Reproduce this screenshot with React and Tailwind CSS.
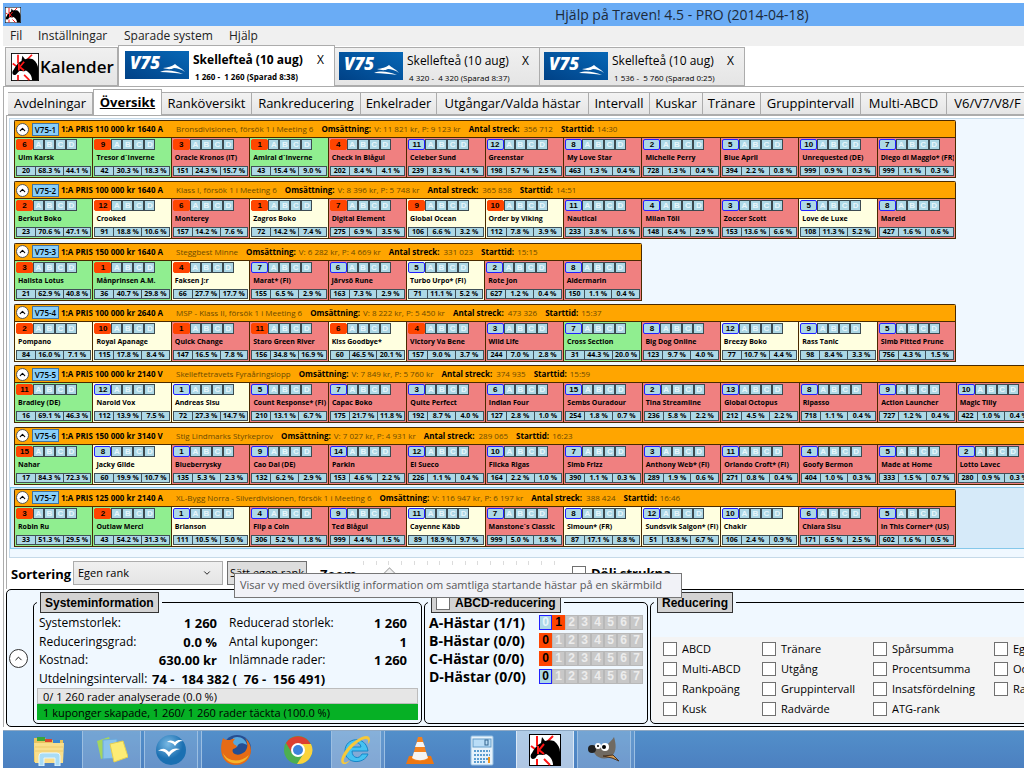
import { ChevronDown, ChevronUp } from 'lucide-react';

const menu = [
  { label: 'Fil', width: 'w-7' },
  { label: 'Inställningar', width: 'w-[86px]' },
  { label: 'Sparade system', width: 'w-[105px]' },
  { label: 'Hjälp', width: 'w-10' },
];

const systems = [
  { rows: '1 260 -  1 260 (Sparad 8:38)', active: true },
  { rows: '4 320 -  4 320 (Sparad 8:37)' },
  { rows: '1 536 -  5 760 (Sparad 0:25)' },
];

const views = [
  { label: 'Avdelningar', width: 'w-[85px]' },
  { label: 'Översikt', width: 'w-[69px]', active: true },
  { label: 'Ranköversikt', width: 'w-[90px]' },
  { label: 'Rankreducering', width: 'w-[109px]' },
  { label: 'Enkelrader', width: 'w-[76px]' },
  { label: 'Utgångar/Valda hästar', width: 'w-[152px]' },
  { label: 'Intervall', width: 'w-[61px]' },
  { label: 'Kuskar', width: 'w-[53px]' },
  { label: 'Tränare', width: 'w-[58px]' },
  { label: 'Gruppintervall', width: 'w-[100px]' },
  { label: 'Multi-ABCD', width: 'w-[86px]' },
  { label: 'V6/V7/V8/F', width: 'w-[82px]' },
];

// horses: number|name|odds|V75 share|trend, tones: one letter per horse, picked: how many lead numbers are marked
const races = [
  {
    id: 'V75-1', title: '1:A PRIS 110 000 kr 1640 A', desc: 'Bronsdivisionen, försök 1 i Meeting 6',
    turnover: 'V: 11 821 kr, P: 9 123 kr', marks: '356 712', start: '14:30', picked: 5, tones: 'ggrgrrrrrrrr',
    horses: [
      '6|Ulm Karsk|20|68.3|44.1', '9|Tresor d´Inverne|42|30.3|18.3', '3|Oracle Kronos (IT)|151|24.3|15.7',
      '1|Amiral d´Inverne|43|15.4|9.0', '4|Check in Blågul|202|8.4|4.1', '11|Celeber Sund|239|8.3|4.1',
      '12|Greenstar|198|5.7|2.5', '8|My Love Star|463|1.3|0.4', '2|Michelle Perry|728|1.3|0.4',
      '5|Blue April|394|2.2|0.8', '10|Unrequested (DE)|999|0.9|0.3', '7|Diego di Maggio* (FR)|999|1.1|0.3',
    ],
  },
  {
    id: 'V75-2', title: '1:A PRIS 100 000 kr 1640 A', desc: 'Klass I, försök 1 i Meeting 6',
    turnover: 'V: 8 396 kr, P: 5 748 kr', marks: '365 858', start: '14:51', picked: 7, tones: 'gyryryyrrryr',
    horses: [
      '2|Berkut Boko|23|70.6|47.1', '12|Crooked|91|18.8|10.6', '6|Monterey|157|14.2|7.6',
      '1|Zagros Boko|72|14.2|7.4', '7|Digital Element|275|6.9|3.5', '9|Global Ocean|106|6.6|3.2',
      '10|Order by Viking|112|7.8|3.9', '11|Nautical|233|3.8|1.6', '4|Milan Töll|148|6.4|2.9',
      '3|Zoccer Scott|153|13.6|6.6', '5|Love de Luxe|108|11.3|5.2', '8|Mareld|427|1.6|0.6',
    ],
  },
  {
    id: 'V75-3', title: '1:A PRIS 150 000 kr 1640 A', desc: 'Steggbest Minne',
    turnover: 'V: 6 282 kr, P: 4 669 kr', marks: '331 023', start: '15:15', picked: 3, tones: 'ggyrryrr',
    horses: [
      '3|Hallsta Lotus|21|62.9|40.8', '1|Månprinsen A.M.|36|40.7|29.8', '4|Faksen J:r|66|27.7|17.7',
      '7|Marat* (FI)|155|6.5|2.9', '6|Järvsö Rune|163|7.3|2.9', '5|Turbo Urpo* (FI)|71|11.1|5.2',
      '2|Rote Jon|627|1.2|0.4', '8|Aldermarin|150|1.1|0.4',
    ],
  },
  {
    id: 'V75-4', title: '1:A PRIS 100 000 kr 2640 A', desc: 'MSP - Klass II, försök 1 i Meeting 6',
    turnover: 'V: 8 222 kr, P: 5 450 kr', marks: '473 326', start: '15:37', picked: 6, tones: 'yyrryrrgryyr',
    horses: [
      '2|Pompano|84|16.0|7.1', '10|Royal Apanage|115|17.8|8.4', '1|Quick Change|147|16.5|7.8',
      '11|Staro Green River|156|34.8|16.9', '6|Kiss Goodbye*|60|46.5|20.1', '4|Victory Va Bene|157|9.0|3.7',
      '3|Wild Life|244|7.0|2.8', '7|Cross Section|31|44.3|20.0', '8|Big Dog Online|123|9.7|4.0',
      '12|Breezy Boko|77|10.7|4.4', '9|Rass Tanic|98|8.4|3.3', '5|Simb Pitted Prune|756|4.3|1.5',
    ],
  },
  {
    id: 'V75-5', title: '1:A PRIS 100 000 kr 2140 V', desc: 'Skelleftetravets Fyraåringslopp',
    turnover: 'V: 7 849 kr, P: 5 760 kr', marks: '374 935', start: '15:59', picked: 1, tones: 'gyyrrrrrrrrrr',
    horses: [
      '11|Bradley (DE)|16|69.1|46.3', '12|Narold Vox|112|13.9|7.5', '1|Andreas Sisu|72|27.3|14.7',
      '5|Count Response* (FI)|210|13.1|6.7', '7|Capac Boko|175|21.7|11.8', '3|Quite Perfect|192|8.7|4.0',
      '6|Indian Four|127|2.8|1.0', '15|Sembs Ouradour|254|1.8|0.7', '2|Tina Streamline|236|5.8|2.2',
      '13|Global Octopus|212|4.5|2.2', '8|Ripasso|718|1.1|0.4', '9|Action Launcher|727|1.2|0.4',
      '10|Magic Tilly|422|1.0|0.4',
    ],
  },
  {
    id: 'V75-6', title: '1:A PRIS 150 000 kr 3140 V', desc: 'Stig Lindmarks Styrkeprov',
    turnover: 'V: 7 027 kr, P: 4 931 kr', marks: '289 065', start: '16:23', picked: 1, tones: 'gyrrrrrrrrrrr',
    horses: [
      '15|Nahar|17|84.3|72.3', '8|Jacky Glide|60|19.9|10.7', '1|Blueberrysky|135|5.3|2.3',
      '9|Cao Dai (DE)|132|6.2|2.9', '14|Parkin|153|4.6|2.2', '12|El Sueco|226|1.1|0.4',
      '10|Flicka Rigas|164|2.2|1.0', '7|Simb Frizz|390|1.1|0.3', '3|Anthony Web* (FI)|289|1.9|0.6',
      '11|Orlando Croft* (FI)|271|0.8|0.4', '4|Goofy Bermon|404|1.0|0.3', '5|Made at Home|333|1.5|0.7',
      '2|Lotto Lavec|280|0.9|0.3',
    ],
  },
  {
    id: 'V75-7', title: '1:A PRIS 125 000 kr 2140 A', desc: 'XL-Bygg Norra - Silverdivisionen, försök 1 i Meeting 6',
    turnover: 'V: 116 947 kr, P: 6 197 kr', marks: '388 424', start: '16:46', picked: 2, tones: 'ggyrryryyyrr', selected: true,
    horses: [
      '3|Robin Ru|33|51.3|29.5', '2|Outlaw Merci|43|54.2|31.3', '1|Brianson|111|10.5|5.0',
      '4|Flip a Coin|306|5.2|1.8', '9|Ted Blågul|999|4.4|1.5', '11|Cayenne Käbb|89|18.9|9.7',
      '7|Manstone´s Classic|999|5.0|1.8', '8|Simoun* (FR)|87|17.1|8.8', '12|Sundsvik Saigon* (FI)|51|13.8|6.7',
      '10|Chakir|106|2.4|0.9', '6|Chiara Sisu|171|6.5|2.5', '5|In This Corner* (US)|602|1.6|0.5',
    ],
  },
];

const toneClass = { g: 'bg-[#90ee90]', r: 'bg-[#f08080]', y: 'bg-[#ffffe0]' };

const groups = [
  { label: 'A-Hästar (1/1)', picked: 1, allowed: [0] },
  { label: 'B-Hästar (0/0)', picked: 0, allowed: [] },
  { label: 'C-Hästar (0/0)', picked: 0, allowed: [] },
  { label: 'D-Hästar (0/0)', picked: -1, allowed: [0] },
];

const reductions = [
  { width: 'w-[99px]', items: ['ABCD', 'Multi-ABCD', 'Rankpoäng', 'Kusk'] },
  { width: 'w-[111px]', items: ['Tränare', 'Utgång', 'Gruppintervall', 'Radvärde'] },
  { width: 'w-[121px]', items: ['Spårsumma', 'Procentsumma', 'Insatsfördelning', 'ATG-rank'] },
  { width: 'w-[110px]', items: ['Egen rank', 'Oddssumma', 'Radintervall'] },
];

function HorseIcon({ className }) {
  return (
    <svg viewBox="0 0 32 32" className={className} aria-hidden="true">
      <rect x="0.5" y="0.5" width="31" height="31" fill="#fff" stroke="#000" />
      <path d="M8 2 V12 M24 2 L18 8 M2 12 L6 15 M8 25 V31 M15 25 L21 31" stroke="#ff1515" strokeWidth="2" fill="none" />
      <path
        d="M12 9 L13 3 L16 7 C19 6 22 6 25 7 C29 10 31 14 31 18 V31 L24 31 C24 26 21 22 17 20 C14 22 11 20 9 21 C7 22 7 25 4 25 C1 25 1 21 3 19 C5 15 8 11 12 9 Z"
        fill="#000"
      />
      <path d="M9 12 V20 M15 10 L10 16 L15 20" stroke="#ff1515" strokeWidth="2" fill="none" />
    </svg>
  );
}

function V75Logo() {
  return (
    <svg viewBox="0 0 64 28" className="h-7 w-16 shrink-0" role="img" aria-label="V75">
      <defs>
        <linearGradient id="v75" x1="0" x2="1" y1="1" y2="0">
          <stop offset="0" stopColor="#004186" />
          <stop offset="1" stopColor="#0767b6" />
        </linearGradient>
      </defs>
      <rect width="64" height="28" fill="url(#v75)" />
      <text x="5" y="18" fill="#fff" fontFamily="Open Sans, sans-serif" fontSize="17" fontWeight="800" fontStyle="italic">V75</text>
      <path d="M38 17 C44 16 46 16 50 13 C53 16 57 17 60 21 C56 18 52 17 49 17 C45 19 42 18 38 17 Z" fill="#fff" />
      <path d="M35 21 C42 18 50 20 58 23 C51 22 43 21 35 21 Z" fill="#fff" />
    </svg>
  );
}

function SystemTab({ system }) {
  const { active, rows } = system;
  return (
    <div
      role="tab"
      aria-selected={!!active}
      className={
        active
          ? 'flex h-[41px] w-[217px] items-start gap-1 border border-b-0 border-[#acacac] bg-white pt-[5px] pl-[6px]'
          : 'flex h-[39px] w-[205px] items-start gap-1 border border-l-0 border-[#acacac] bg-linear-to-b from-[#f0f0f0] to-[#e5e5e5] pt-[4px] pl-[4px]'
      }
    >
      <V75Logo />
      <div className={active ? 'w-[120px] font-bold' : 'w-[111px]'}>
        <div className="text-[12px] leading-[18px] whitespace-nowrap">Skellefteå (10 aug)</div>
        <div className={active ? 'pl-[2px] text-[8px] leading-[16px] font-bold whitespace-pre' : 'pl-[2px] text-[8px] leading-[16px] whitespace-pre'}>{rows}</div>
      </div>
      <button className="text-[12px] leading-[18px]" aria-label="Stäng">X</button>
    </div>
  );
}

function Horse({ horse, tone, picked }) {
  const [number, name, odds, share, trend] = horse.split('|');
  return (
    <div className={`min-w-0 flex-1 overflow-hidden border-r border-[#4a2a00] px-px ${toneClass[tone]}`}>
      <div className="mt-px flex h-[11px] font-['Liberation_Sans'] text-[8px] leading-[9px] font-bold">
        <button
          className={
            picked
              ? 'w-[17px] rounded-xs border border-[#ff4500] bg-[#ff4500]'
              : 'w-[17px] rounded-xs border border-[#2020ff] bg-[#add8e6]'
          }
        >
          {number}
        </button>
        {['A', 'B', 'C', 'D'].map((letter) => (
          <button key={letter} className="w-[11px] border border-[#3c4a50] bg-[#add8e6] text-[#e8f6fb]">
            {letter}
          </button>
        ))}
      </div>
      <div className="overflow-hidden pl-[2px] text-[7px] leading-[16px] font-bold whitespace-nowrap">{name}</div>
      <div className="flex h-[10px] border border-[#405058] bg-[#add8e6] text-center text-[7px] leading-[8px] font-bold whitespace-nowrap">
        <span className="w-[18px]">{odds}</span>
        <span className="flex-1 border-l border-[#405058]">{share} %</span>
        <span className="flex-1 border-l border-[#405058]">{trend} %</span>
      </div>
    </div>
  );
}

function Race({ race }) {
  const width = Math.round((race.horses.length * 942) / 12);
  return (
    <li className={race.selected ? 'border border-r-0 border-[#85c8ea] bg-[#d6eaf9] py-px pl-[3px]' : 'py-px pl-1'}>
      <section className="overflow-hidden rounded-t-xs border border-r-0 border-[#4a2a00]" style={{ width }}>
        <header className="flex h-[16px] items-center border-r border-[#4a2a00] bg-[#ffa500] text-[8px] whitespace-nowrap text-[#6b4a00]">
          <button className="ml-px grid size-[13px] place-items-center rounded-full border border-[#555] bg-white text-black" aria-label="Fäll ihop">
            <ChevronUp size={9} strokeWidth={3} />
          </button>
          <span className="ml-[3px] w-[27px] border border-[#41719c] bg-[#87cefa] text-center leading-[11px] font-semibold text-black">{race.id}</span>
          <b className="ml-[2px] w-[115px] text-black">{race.title}</b>
          <span>{race.desc}</span>
          <b className="mr-[3px] ml-2 text-black">Omsättning:</b>
          <span>{race.turnover}</span>
          <b className="mr-[4px] ml-2 text-black">Antal streck:</b>
          <span>{race.marks}</span>
          <b className="mr-[3px] ml-2 text-black">Starttid:</b>
          <span>{race.start}</span>
        </header>
        <div className="flex h-10 border-t border-[#4a2a00]">
          {race.horses.map((horse, i) => (
            <Horse key={horse} horse={horse} tone={race.tones[i]} picked={i < race.picked} />
          ))}
        </div>
      </section>
    </li>
  );
}

function Check({ label }) {
  return (
    <label className="flex h-5 items-center gap-[5px] text-[11px] whitespace-nowrap">
      <input type="checkbox" className="size-[14px] appearance-none border border-[#707070] bg-white" />
      {label}
    </label>
  );
}

function Group({ title, className, children }) {
  return (
    <fieldset className={`min-w-0 rounded-[5px] border border-black ${className}`}>
      <legend className="ml-[3px] px-[3px]">
        <span className="flex h-[21px] items-center border border-[#333] bg-[#d3d3d3] px-1 font-['Liberation_Sans'] text-[12px] font-bold whitespace-nowrap">{title}</span>
      </legend>
      {children}
    </fieldset>
  );
}

function SystemInfo() {
  return (
    <Group title="Systeminformation" className="w-[389px]">
      <dl className="mt-px grid h-[74px] grid-cols-[98px_80px_12px_98px_80px] grid-rows-4 items-center pl-[5px] text-[12px] leading-[18px] whitespace-nowrap [&_dd]:text-right [&_dd]:text-[13px] [&_dd]:font-bold">
        <dt>Systemstorlek:</dt>
        <dd>1 260</dd>
        <dt className="col-start-4">Reducerad storlek:</dt>
        <dd>1 260</dd>
        <dt>Reduceringsgrad:</dt>
        <dd>0.0 %</dd>
        <dt className="col-start-4">Antal kuponger:</dt>
        <dd>1</dd>
        <dt>Kostnad:</dt>
        <dd>630.00 kr</dd>
        <dt className="col-start-4">Inlämnade rader:</dt>
        <dd>1 260</dd>
        <dt>Utdelningsintervall:</dt>
        <dd className="col-span-4 pl-[15px] text-left! whitespace-pre">74 -  184 382 (  76 -  156 491)</dd>
      </dl>
      <div className="mx-[3px] text-[11px]">
        <div className="h-4 border border-[#bcbcbc] bg-[#e6e6e6] pl-[5px] leading-[15px]">0/ 1 260 rader analyserade (0.0 %)</div>
        <div className="h-4 bg-[#06b025] pl-[6px] leading-[17px]">1 kuponger skapade, 1 260/ 1 260 rader täckta (100.0 %)</div>
      </div>
    </Group>
  );
}

function AbcdReduction() {
  const title = (
    <label className="flex items-center gap-[5px]">
      <input type="checkbox" className="size-[14px] appearance-none border border-[#707070] bg-white" />
      ABCD-reducering
    </label>
  );
  return (
    <Group title={title} className="w-[224px]">
      {groups.map((group) => (
        <div key={group.label} className="flex h-[18px] items-center pl-1">
          <span className="w-[110px] text-[14px] font-bold whitespace-nowrap">{group.label}</span>
          {[0, 1, 2, 3, 4, 5, 6, 7].map((n) => {
            let look = 'border-[#b8b8b8] bg-[#c8c8c8] text-[#ececec]';
            if (group.picked === n) look = 'border-[#ff4500] bg-[#ff4500] text-black';
            else if (group.allowed.includes(n)) look = group.picked < 0 ? 'border-[#2020ff] bg-[#add8e6] text-black' : 'border-[#2020ff] bg-[#add8e6] text-[#e8f6fb]';
            return (
              <button key={n} className={`h-[15px] w-[13px] border font-['Liberation_Sans'] text-[12px] leading-[13px] font-bold ${look}`}>
                {n}
              </button>
            );
          })}
        </div>
      ))}
    </Group>
  );
}

const apps = {
  folder: (
    <svg viewBox="0 0 32 32" className="size-8">
      <path d="M1 4 H12 L14 6 H30 V28 H1 Z" fill="#e8c45f" />
      <path d="M4 3 H12 V7 H4 Z" fill="#3aa53a" />
      <path d="M12 5 H19 V8 H12 Z" fill="#d9462c" />
      <path d="M20 6 H27 V9 H20 Z" fill="#3b88cf" />
      <path d="M1 9 H31 L30 29 H2 Z" fill="#f9df8c" />
      <path d="M2 13 H30 M2 17 H30" stroke="#edcb6c" />
      <path d="M6 32 V22 Q6 19 9 19 H24 Q27 19 27 22 V32 H22 V24 H11 V32 Z" fill="#a9dcf5" stroke="#e4f6ff" />
    </svg>
  ),
  notes: (
    <svg viewBox="0 0 32 32" className="size-8">
      <path d="M1 7 L13 3 L18 20 L5 25 Z" fill="#a4d65e" />
      <path d="M7 6 L21 5 L21 24 L7 25 Z" fill="#8cc4ec" stroke="#6aa9dc" />
      <path d="M14 10 L27 7 L32 23 L18 28 Z" fill="#fdec75" stroke="#e5cf50" />
    </svg>
  ),
  office: (
    <svg viewBox="0 0 32 32" className="size-8">
      <defs>
        <radialGradient id="office" cx="0.4" cy="0.3">
          <stop offset="0" stopColor="#79b9e4" />
          <stop offset="1" stopColor="#1b70b2" />
        </radialGradient>
      </defs>
      <circle cx="16" cy="16" r="15" fill="url(#office)" />
      <path d="M12 8 C16 5 18 7 20 8 C23 5 26 6 28 7 C24 7 22 9 20 12 C18 9 16 8 12 8 Z" fill="#fff" />
      <path d="M3 17 C8 13 11 15 14 18 C17 14 21 14 25 15 C20 16 16 19 14 23 C11 18 8 16 3 17 Z" fill="#fff" />
    </svg>
  ),
  firefox: (
    <svg viewBox="0 0 32 32" className="size-8">
      <circle cx="17" cy="15" r="14" fill="#254e92" />
      <path d="M13 4 C19 1 26 5 27 11 C22 8 18 9 17 13 C13 12 12 8 13 4 Z" fill="#58a8dc" />
      <path d="M3 4 C5 6 7 6 10 6 C13 4 15 5 15 5 C13 7 12 9 15 11 C18 12 17 14 13 15 C11 19 16 22 21 20 C28 18 29 10 25 4 C36 13 31 31 16 31 C3 31 -2 18 3 4 Z" fill="#e66b15" />
      <path d="M3 19 C7 27 19 30 29 21 C25 29 18 30 13 29 C8 28 4 24 3 19 Z" fill="#f6b52c" />
    </svg>
  ),
  chrome: (
    <svg viewBox="0 0 32 32" className="size-8">
      <circle cx="16" cy="16" r="14" fill="#4caf50" />
      <path d="M4 9 A14 14 0 0 1 28 9 L29 11 H16 L10 19 Z" fill="#dc3f32" />
      <path d="M29 10 A14 14 0 0 1 15 30 L22 19 L20 10 Z" fill="#fbd33b" />
      <circle cx="16" cy="16" r="7" fill="#fff" />
      <circle cx="16" cy="16" r="5" fill="#3d83dc" />
    </svg>
  ),
  explorer: (
    <svg viewBox="0 0 32 32" className="size-8">
      <path d="M28 17 H12 C12 24 19 26 22 20 H28 C24 31 5 30 5 17 C5 3 26 1 28 17 Z M12 13 H21 C20 7 13 7 12 13 Z" fill="#45c2f2" stroke="#1686c7" />
      <path d="M5 30 C-1 31 0 22 9 12 C17 4 29 -2 30 5 C30 7 29 9 28 10 C29 5 27 4 22 6 C12 11 2 25 4 28 C5 29 8 28 10 26 C8 29 6 30 5 30 Z" fill="#f6c83a" />
    </svg>
  ),
  vlc: (
    <svg viewBox="0 0 32 32" className="size-8">
      <path d="M5 22 H27 L30 30 H2 Z" fill="#ec7712" />
      <path d="M14 3 H18 L24 25 C19 28 13 28 8 25 Z" fill="#f4821f" />
      <path d="M13 8 H19 L21 13 H11 Z M10 18 H22 L24 24 C19 27 13 27 8 24 Z" fill="#f4f4f4" />
    </svg>
  ),
  calculator: (
    <svg viewBox="0 0 32 32" className="size-8">
      <rect x="5" y="2" width="22" height="29" rx="1" fill="#e6f2fb" stroke="#94bee0" />
      <rect x="7" y="5" width="18" height="8" fill="#b9ddf7" stroke="#659dca" />
      <rect x="19" y="6" width="3" height="5" fill="none" stroke="#33658e" />
      <path d="M8 17 H24 M8 21 H24 M8 25 H24 M8 28 H20" stroke="#5b9dd0" strokeWidth="2" strokeDasharray="2 1" />
      <path d="M23 23 V29" stroke="#f1951d" strokeWidth="2" />
    </svg>
  ),
  horse: <HorseIcon className="size-8" />,
  gimp: (
    <svg viewBox="0 0 32 32" className="size-8">
      <path d="M2 13 C6 10 9 12 12 14 C17 13 22 9 26 3 C28 10 29 17 24 22 C19 26 10 25 7 20 Z" fill="#706a62" />
      <circle cx="4" cy="15" r="4" fill="#202020" />
      <circle cx="10" cy="12" r="3" fill="#fff" />
      <circle cx="17" cy="13" r="4" fill="#fff" />
      <circle cx="10" cy="12" r="1" />
      <circle cx="16" cy="13" r="2" />
      <path d="M15 22 L25 21 L31 27 L24 24 Z" fill="#d49a52" stroke="#473322" />
    </svg>
  ),
};

const taskbar = [
  { app: 'folder', label: 'Utforskaren', look: 'ml-4 w-[60px] border-transparent' },
  { app: 'notes', label: 'Fästisar', look: 'ml-[3px] w-[59px] border-[#9cbfe2] bg-white/20' },
  { app: 'office', label: 'OpenOffice', look: 'ml-[3px] w-[54px] border-[#9cbfe2] bg-white/15', stacked: true },
  { app: 'firefox', label: 'Firefox', look: 'ml-[4px] w-[60px] border-transparent' },
  { app: 'chrome', label: 'Chrome', look: 'ml-[2px] w-[60px] border-transparent' },
  { app: 'explorer', label: 'Internet Explorer', look: 'ml-[3px] w-[50px] border-[#9cbfe2] bg-white/30', stacked: true },
  { app: 'vlc', label: 'VLC', look: 'ml-[5px] w-[60px] border-transparent' },
  { app: 'calculator', label: 'Kalkylatorn', look: 'ml-[2px] w-[60px] border-transparent' },
  { app: 'horse', label: 'Hjälp på Traven!', look: 'ml-[4px] w-[58px] border-[#dce9f6] bg-white/55' },
  { app: 'gimp', label: 'GIMP', look: 'ml-[3px] w-[54px] border-[#9cbfe2] bg-white/20', stacked: true },
];

export default function App() {
  return (
    <div className="relative flex min-h-screen w-full flex-col overflow-hidden bg-white pt-[3px] pl-[3px] font-['Open_Sans',sans-serif] text-black">
      <header className="flex h-[23px] shrink-0 items-center bg-[#6aacf5] pl-[2px]">
        <HorseIcon className="size-4" />
        <h1 className="ml-[534px] text-[14px] whitespace-nowrap text-[#1c2a3a]">Hjälp på Traven! 4.5 - PRO (2014-04-18)</h1>
      </header>

      <nav className="flex h-5 shrink-0 items-center bg-[#f0f0f0] pl-[7px] text-[12px] text-[#222]">
        {menu.map((item) => (
          <button key={item.label} className={`text-left whitespace-nowrap ${item.width}`}>{item.label}</button>
        ))}
      </nav>

      <div role="tablist" className="flex h-[41px] shrink-0 items-end border-b border-[#acacac] pl-[2px]">
        <button className="flex h-[39px] w-[113px] items-center border border-[#acacac] bg-linear-to-b from-[#f0f0f0] to-[#e5e5e5] pl-[5px]">
          <HorseIcon className="size-[28px]" />
          <span className="pl-px text-[17px] font-semibold">Kalender</span>
        </button>
        {systems.map((system) => (
          <SystemTab key={system.rows} system={system} />
        ))}
      </div>

      <main className="flex flex-col border-l border-[#acacac] pt-[2px] pl-[2px]">
        <div role="tablist" className="flex h-[26px] items-end pl-[2px] text-[13px]">
          {views.map((view) => (
            <button
              key={view.label}
              role="tab"
              aria-selected={!!view.active}
              className={
                view.active
                  ? `h-[26px] shrink-0 border border-b-0 border-[#acacac] bg-white font-bold whitespace-nowrap underline ${view.width}`
                  : `h-[23px] shrink-0 border border-l-0 border-[#acacac] bg-linear-to-b from-[#f3f3f3] to-[#e5e5e5] whitespace-nowrap ${view.width}`
              }
            >
              {view.label}
            </button>
          ))}
        </div>

        <div className="border-t border-l border-[#acacac] pt-[2px] pl-[2px]">
          <ul className="flex h-[440px] flex-col justify-between overflow-hidden border border-r-0 border-[#c5d9e8] bg-[#f0f8ff] pb-[8px]">
            {races.map((race) => (
              <Race key={race.id} race={race} />
            ))}
          </ul>

          <div className="flex h-[31px] items-start pt-[3px] pl-[2px] text-[13px] font-bold">
            <label htmlFor="sort" className="w-[62px] leading-[26px]">Sortering</label>
            <div className="grid h-6 w-[150px] grid-cols-[1fr_20px] items-center border border-[#acacac] bg-linear-to-b from-[#f0f0f0] to-[#e5e5e5] font-normal">
              <select id="sort" className="col-span-2 col-start-1 row-start-1 h-full appearance-none pl-[4px] text-[11px]">
                <option>Egen rank</option>
              </select>
              <ChevronDown size={10} className="pointer-events-none col-start-2 row-start-1" />
            </div>
            <button className="ml-1 h-6 w-20 border border-[#707070] bg-[#dddddd] text-[11px] font-normal whitespace-nowrap">Sätt egen rank</button>
            <label htmlFor="zoom" className="ml-[13px] w-[43px] leading-[26px]">Zoom</label>
            <div className="w-[192px]">
              <div className="flex h-1 justify-between">
                {Array.from({ length: 16 }, (_, i) => (
                  <i key={i} className="w-px bg-[#dcdcdc]" />
                ))}
              </div>
              <input
                id="zoom"
                type="range"
                defaultValue="12"
                className="block h-4 w-full appearance-none bg-transparent [&::-webkit-slider-thumb]:size-[9px] [&::-webkit-slider-thumb]:rotate-45 [&::-webkit-slider-thumb]:appearance-none [&::-webkit-slider-thumb]:border [&::-webkit-slider-thumb]:border-[#acacac] [&::-webkit-slider-thumb]:bg-[#f0f0f0]"
              />
            </div>
            <label className="ml-[17px] flex items-center gap-[5px] leading-[24px] whitespace-nowrap">
              <input type="checkbox" className="size-[14px] appearance-none border border-[#707070] bg-white" />
              Dölj strukna
            </label>
          </div>
        </div>

        <div className="mr-[-8px] flex h-[138px] items-stretch gap-[3px] rounded-[5px] border border-black bg-[#f0f8ff] pt-[2px] pb-[2px]">
          <div className="grid w-[23px] shrink-0 place-items-center">
            <button className="grid size-[19px] place-items-center rounded-full border border-[#333] bg-white" aria-label="Fäll ihop">
              <ChevronUp size={11} strokeWidth={2} />
            </button>
          </div>
          <div className="flex gap-[2px] [&>fieldset]:shrink-0">
            <SystemInfo />
            <AbcdReduction />
            <Group title="Reducering" className="w-[460px]">
              <div className="mx-px mt-[24px] flex bg-[#f4f4f4] pt-[2px] pb-[3px] pl-[11px]">
                {reductions.map((column) => (
                  <div key={column.items[0]} className={`shrink-0 ${column.width}`}>
                    {column.items.map((item) => (
                      <Check key={item} label={item} />
                    ))}
                  </div>
                ))}
              </div>
            </Group>
          </div>
        </div>
      </main>

      <footer className="mt-[3px] flex h-[38px] shrink-0 items-stretch overflow-hidden border-t border-[#8fa9c4] bg-linear-to-b from-[#528fca] to-[#4c80c0]">
        {taskbar.map((item) => (
          <div key={item.app} className="flex shrink-0">
            <button aria-label={item.label} className={`grid place-items-center border-x ${item.look}`}>
              {apps[item.app]}
            </button>
            {item.stacked && <span className="w-[4px] border-r border-[#9cbfe2] bg-white/10" />}
          </div>
        ))}
      </footer>

      <div role="tooltip" className="absolute top-[573px] left-[234px] flex h-[25px] w-[448px] items-center border border-[#767676] bg-[#f1f2f7] px-[5px] text-[11px] whitespace-nowrap text-[#575757]">
        Visar vy med översiktlig information om samtliga startande hästar på en skärmbild
      </div>
    </div>
  );
}
